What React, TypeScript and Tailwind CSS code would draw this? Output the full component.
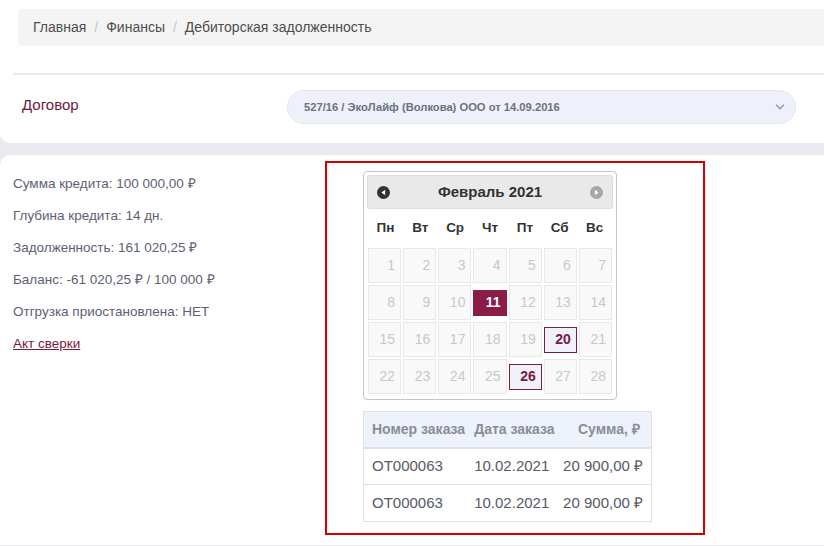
import { ChevronDown } from "lucide-react";

const DAYS = ["Пн", "Вт", "Ср", "Чт", "Пт", "Сб", "Вс"];

const INFO = [
  "Сумма кредита: 100 000,00 ₽",
  "Глубина кредита: 14 дн.",
  "Задолженность: 161 020,25 ₽",
  "Баланс: -61 020,25 ₽ / 100 000 ₽",
  "Отгрузка приостановлена: НЕТ",
];

const ORDERS = [
  { num: "ОТ000063", date: "10.02.2021", sum: "20 900,00 ₽" },
  { num: "ОТ000063", date: "10.02.2021", sum: "20 900,00 ₽" },
];

function DayCell({ day }: { day: number }) {
  if (day === 11) {
    return (
      <div className="flex h-[35px] items-center">
        <div className="flex h-[26px] w-full items-center justify-end bg-[#8a1c47] pr-[6px] text-[14px] font-bold text-white">
          {day}
        </div>
      </div>
    );
  }
  if (day === 20 || day === 26) {
    return (
      <div className="flex h-[35px] items-center">
        <div className="flex h-[26px] w-full items-center justify-end border border-[#7a1d40] bg-[#eef1fa] pr-[5px] text-[14px] font-bold text-[#7a1a3c]">
          {day}
        </div>
      </div>
    );
  }
  return (
    <div className="flex h-[35px] items-center justify-end border border-[#e8e8e8] bg-[#f9f9f9] pr-[5px] text-[14px] text-[#c8c8c8]">
      {day}
    </div>
  );
}

function Calendar() {
  const days = Array.from({ length: 28 }, (_, i) => i + 1);
  return (
    <div className="w-[254px] rounded-[4px] border border-[#c5c5c5] bg-white p-[3px] pb-[5px] font-['Liberation_Sans',Arial,sans-serif]">
      <div className="flex h-[34px] items-center justify-between rounded-[3px] border border-[#dddddd] bg-[#e9e9e9] px-[9px]">
        <svg width="13" height="13" viewBox="0 0 16 16">
          <circle cx="8" cy="8" r="8" fill="#333" />
          <path d="M10 4.5 L5.5 8 L10 11.5 Z" fill="#fff" />
        </svg>
        <span className="text-[15px] font-bold text-[#333]">Февраль 2021</span>
        <svg width="13" height="13" viewBox="0 0 16 16">
          <circle cx="8" cy="8" r="8" fill="#a6a6a6" />
          <path d="M6 4.5 L10.5 8 L6 11.5 Z" fill="#fff" />
        </svg>
      </div>
      <div className="grid h-[39px] grid-cols-7 items-center px-[1px] text-center text-[13.5px] font-bold text-[#333]">
        {DAYS.map((d) => (
          <span key={d}>{d}</span>
        ))}
      </div>
      <div className="grid grid-cols-7 gap-[2px] px-[1px]">
        {days.map((d) => (
          <DayCell key={d} day={d} />
        ))}
      </div>
    </div>
  );
}

export default function App() {
  return (
    <div className="h-[546px] overflow-hidden bg-[#e9eaef] font-['Liberation_Sans',Arial,sans-serif]">
      {/* Top panel */}
      <div className="h-[143px] rounded-bl-[10px] bg-white pt-[9px]">
        <div className="ml-[18px] flex h-[37px] items-center gap-[8px] rounded-l-[4px] bg-[#f4f4f4] pl-[15px] text-[14px] text-[#4d4d4d]">
          <span>Главная</span>
          <span className="text-[#c4c4c4]">/</span>
          <span>Финансы</span>
          <span className="text-[#c4c4c4]">/</span>
          <span>Дебиторская задолженность</span>
        </div>
        <div className="ml-[13px] mt-[27px] h-[2px] bg-[#e8e9ee]" />
        <div className="mt-[15px] flex items-center">
          <span className="-mt-[3px] w-[287px] pl-[22px] text-[15px] text-[#6a1a3a]">Договор</span>
          <div className="flex h-[34px] w-[509px] items-center justify-between rounded-full border border-[#e4e7ef] bg-[#eef1f9] pl-[16px] pr-[8px] text-[11.2px] font-bold text-[#6d7080]">
            <span>527/16 / ЭкоЛайф (Волкова) ООО от 14.09.2016</span>
            <ChevronDown size={14} strokeWidth={3} className="text-[#9a9da8]" />
          </div>
        </div>
      </div>

      {/* Main panel */}
      <div className="mt-[12px] flex h-[390px] rounded-tl-[10px] bg-white pt-[6px]">
        <div className="w-[325px] pl-[13px] pt-[7px] text-[13.5px] text-[#5c6172]">
          {INFO.map((line) => (
            <div key={line} className="flex h-[32px] items-center">
              {line}
            </div>
          ))}
          <div className="flex h-[32px] items-center">
            <a href="#" className="text-[#7a1a3c] underline">
              Акт сверки
            </a>
          </div>
        </div>

        <div className="h-[374px] w-[380px] border-2 border-[#d40000] pl-[36px] pt-[8px]">
          <Calendar />
          <table className="mt-[11px] w-[289px] border border-[#dee2e6] text-[15px]">
            <thead>
              <tr className="h-[36px] border-b-2 border-[#dee2e6] bg-[#eef2fa] text-[14px] font-bold text-[#8a8d97]">
                <th className="pl-[8px] text-left font-bold">Номер заказа</th>
                <th className="pl-[4px] text-left font-bold">Дата заказа</th>
                <th className="pl-[8px] text-center font-bold">Сумма, ₽</th>
              </tr>
            </thead>
            <tbody className="text-[#555a66]">
              {ORDERS.map((o, i) => (
                <tr key={i} className="h-[37px] border-t border-[#dee2e6]">
                  <td className="pl-[8px]">{o.num}</td>
                  <td className="pl-[4px]">{o.date}</td>
                  <td className="pr-[8px] text-right">{o.sum}</td>
                </tr>
              ))}
            </tbody>
          </table>
        </div>
      </div>
    </div>
  );
}
